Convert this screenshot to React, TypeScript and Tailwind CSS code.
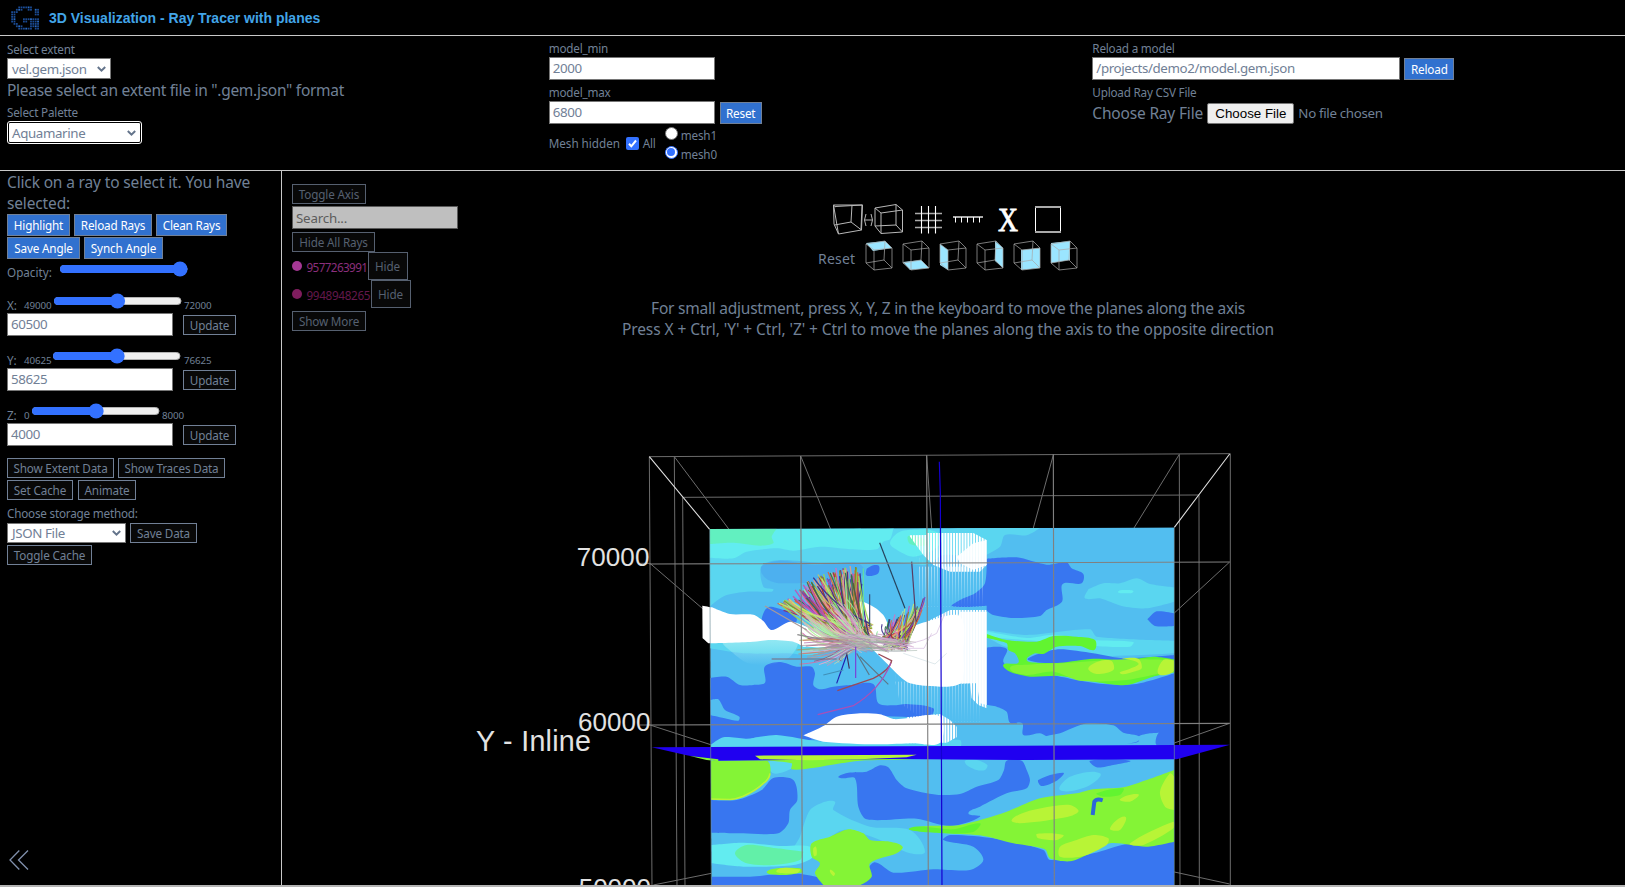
import React from "react";

const LOGO = [
  "000111111000",
  "001110011011",
  "111000000011",
  "110000000011",
  "110000000000",
  "110001111111",
  "110001101111",
  "011000001111",
  "001110001111",
  "000111111011",
];

function Logo() {
  return (
    <svg className="block h-[24px] w-[28px]" viewBox="0 0 28 24">
      {LOGO.flatMap((row, y) =>
        row.split("").map((c, x) =>
          c === "1" ? (
            <rect key={`${x}-${y}`} x={x * 2.36 + 0.2} y={y * 2.36 + 0.5} width="1.8" height="1.8" fill={(x * 3 + y * 5) % 7 === 0 ? "#2a6cc4" : "#1a4a92"} />
          ) : null,
        ),
      )}
    </svg>
  );
}

function Chevron() {
  return (
    <svg className="h-[6px] w-[9px] shrink-0" viewBox="0 0 9 6">
      <path d="M0.8 1 L4.5 4.6 L8.2 1" fill="none" stroke="#64748b" strokeWidth="2" />
    </svg>
  );
}

function Select({ text, className }: { text: string; className: string }) {
  return (
    <div className={`flex items-center justify-between bg-white pr-[4px] pl-[4px] text-[13.33px] leading-[18px] tracking-[-0.38px] text-[#718096] ${className}`}>
      <span>{text}</span>
      <Chevron />
    </div>
  );
}

function Field({ text, className = "w-[166px]" }: { text: string; className?: string }) {
  return (
    <div className={`h-[23px] shrink-0 border border-[#767676] bg-white pl-[3px] text-[13.33px] leading-[21px] tracking-[-0.38px] text-[#718096] ${className}`}>{text}</div>
  );
}

function Blue({ children, className }: { children: React.ReactNode; className: string }) {
  return (
    <button className={`h-[22px] shrink-0 border border-[#718096] bg-[#3171cf] text-center text-[11.7px] leading-[21px] tracking-[-0.15px] whitespace-nowrap text-white ${className}`}>
      {children}
    </button>
  );
}

function Dark({ children, className }: { children: React.ReactNode; className: string }) {
  return (
    <button className={`shrink-0 border bg-[#080808] text-center text-[11.7px] tracking-[-0.15px] whitespace-nowrap ${className}`}>
      {children}
    </button>
  );
}

function Slider({ value }: { value: number }) {
  const cx = 7.5 + (128 - 15) * value;
  return (
    <svg className="h-[16px] w-[128px] shrink-0" viewBox="0 0 128 16">
      <rect x="0.5" y="4.5" width="126.5" height="7" rx="3.5" fill="#efefef" stroke="#b2b2b2" />
      <rect x="0" y="4" width={cx} height="8" rx="4" fill="#3371ff" />
      <circle cx={cx - 0.5} cy="8" r="7.6" fill="#3371ff" />
    </svg>
  );
}

function Axis({ name, min, max, value, pos, minClass, maxClass }: { name: string; min: string; max: string; value: string; pos: number; minClass: string; maxClass: string }) {
  return (
    <div className="h-[55px]">
      <div className="flex h-[20px] text-[11.7px] leading-[20px]">
        <span className="w-[17px] shrink-0 pt-[2px]">{name}</span>
        <span className={`shrink-0 pt-[3px] text-[9.8px] tracking-[-0.1px] ${minClass}`}>{min}</span>
        <Slider value={pos} />
        <span className={`pt-[3px] text-[9.8px] tracking-[-0.1px] ${maxClass}`}>{max}</span>
      </div>
      <div className="flex">
        <Field text={value} />
        <Dark className="mt-[2px] ml-[10px] h-[20px] w-[53px] border-[#718096] leading-[19px] text-[#718096]">Update</Dark>
      </div>
    </div>
  );
}

function CubeWire({ face }: { face: string }) {
  return (
    <svg className="h-[31px] w-[28px] shrink-0" viewBox="0 0 28 31">
      <path d={face} fill="#9be5ff" />
      <path d="M1 4 L20 1 L27 8 L27 28 L9 30 L1 23Z M9 10 L27 8 M1 4 L9 10 L9 30 M20 1 L19 20 L27 28 M1 23 L19 20" fill="none" stroke="#a8a8a8" strokeWidth="0.9" opacity=".8" />
    </svg>
  );
}

const FACES = [
  "M1 3 L20 1 L27 8 L8 11Z",
  "M1 22 L19 20 L27 28 L8 30Z",
  "M1 4 L9 10 L9 30 L1 25Z",
  "M19 1 L27 8 L27 28 L19 21Z",
  "M8 10 L27 8 L27 28 L8 30Z",
  "M1 3 L20 1 L20 20 L1 23Z",
];

function Toolbar() {
  return (
    <div className="flex flex-col">
      <svg className="ml-[830px] block h-[34px] w-[240px] overflow-visible" viewBox="830 201 240 34">
        <g fill="none" stroke="#b8b8b8" strokeWidth="1">
          <path d="M833.5 205 L862.5 205 L861.5 230 L838.5 234 L834 224Z M835.5 206.500 L862.500 205 M833.5 205 L838.5 234 M852 205 L851 222 L861.500 230 M834.500 225 L851 222 M862 205 L861 229 M833 205 L836 207" />
          <path d="M866 214 L864.500 220 L866 226 M871 214 L872.500 220 L871 226 M865 220 L872 220" />
          <path d="M875 208 L896 204.500 L902.500 210 L902.500 232 L881 233.500 L875 226Z M881 213 L902.500 210 M875 208 L881 213 L881 233.500 M896 204.500 L896 225 L902.500 232 M875 226 L896 225" />
        </g>
        <path d="M915 213.5H942M915 220.500H942M915 227.500H942" stroke="#aaa" strokeWidth="1.6" />
        <path d="M921.5 206V233.500M928.500 206V233.500M935.500 206V233.500" stroke="#fff" strokeWidth="1.1" />
        <path d="M953 217H983" stroke="#aaa" strokeWidth="2" />
        <path d="M955.5 217V222.500M961.500 217V222.500M967.500 217V222.500M973.500 217V222.500M979.500 217V222.500" stroke="#fff" />
        <text x="1008" y="231" textAnchor="middle" fill="#fff" stroke="#fff" strokeWidth=".8" fontFamily="Liberation Serif, serif" fontSize="33" textLength="20" lengthAdjust="spacingAndGlyphs">X</text>
        <path d="M1035.500 206V233M1060.500 206V233" stroke="#fff" />
        <path d="M1035 207H1061M1035 232H1061" stroke="#aaa" strokeWidth="2" />
      </svg>
      <div className="ml-[818px] flex h-[32px] pt-[5px]">
        <span className="w-[47px] pt-[5px] text-[14px] leading-[28px] tracking-[0.2px] text-[#718096]">Reset</span>
        <div className="flex gap-[9px]">
          {FACES.map((f) => (
            <CubeWire key={f} face={f} />
          ))}
        </div>
      </div>
    </div>
  );
}

function rng(seed: number) {
  let s = seed;
  return () => {
    s = (s * 1664525 + 1013904223) % 4294967296;
    return s / 4294967296;
  };
}

const INK = ["#c8e870", "#7be070", "#8a2a6a", "#b84848", "#3a2a8a", "#a0d848", "#9af0a8", "#555b3a", "#c050b8", "#e8a080", "#2f6a50", "#c8c860", "#a83028", "#8a8a20", "#7a40c0", "#d870c0", "#e06040"];
const HAZE = ["#d8b8d8", "#a8b8b0", "#c890c0", "#b0a0a8", "#98a0a8", "#c8d8b0", "#b878b0", "#8aa890"];

type Ray = { d: string; c: string; w: number; o: number };

function makeRays() {
  const r = rng(77);
  const out: Ray[] = [];
  const pick = () => INK[Math.floor(r() * INK.length)];
  for (let i = 0; i < 150; i++) {
    const t = r();
    const len = r() * r() * 60;
    const tx = 955 + t * 235 + (r() - 0.5) * 10 + len * 0.6;
    const ty = 485 - Math.sin(t * 1.57) * 108 + len + (r() - 0.3) * 14;
    const fx = 1150 + r() * 90;
    const fy = 550 + r() * 75;
    out.push({ d: `M${tx} ${ty} Q${tx + (fx - tx) * 0.42} ${ty + (fy - ty) * 0.7} ${fx} ${fy}`, c: pick(), w: 4, o: 0.9 });
  }
  for (let i = 0; i < 80; i++) {
    const tx = 1020 + r() * 150;
    const ty = 515 + r() * 65 - (tx - 1030) * 0.3;
    out.push({
      d: `M${tx} ${ty} Q${tx + 50} ${ty + 55} ${1160 + r() * 70} ${590 + r() * 30}`,
      c: ["#b8f0a0", "#c8e8b0", "#d8a0d0", "#f0b8c0", "#a0e8b8", "#a0f080", "#d060b8"][Math.floor(r() * 7)],
      w: 3.2,
      o: 0.75,
    });
  }
  for (let i = 0; i < 85; i++) {
    const t = r();
    const tx = 1250 + t * 145 + (r() - 0.5) * 14;
    const ty = 560 - t * 95 + r() * 65;
    const fx = 1270 + r() * 75;
    const fy = 590 + r() * 45;
    out.push({ d: `M${tx} ${ty} Q${tx - 14} ${ty + (fy - ty) * 0.5} ${fx} ${fy}`, c: pick(), w: 3.4, o: 0.9 });
  }
  for (let i = 0; i < 50; i++) {
    const tx = 1000 + r() * 150;
    const ty = 595 + r() * 82;
    out.push({ d: `M${tx} ${ty} Q${1110 + r() * 40} ${ty - 8} ${1160 + r() * 50} ${600 + r() * 24}`, c: [...HAZE, "#b0a840", "#a05070", "#d08070"][Math.floor(r() * 11)], w: 3, o: 0.8 });
  }
  for (let i = 0; i < 100; i++) {
    const x = 1100 + r() * 160;
    const y = 580 + r() * 50;
    out.push({ d: `M${x} ${y} Q${x + 40} ${y + 12 * r()} ${x + 50 + r() * 80} ${595 + r() * 45}`, c: HAZE[Math.floor(r() * HAZE.length)], w: 2.4, o: 0.75 });
  }
  return out;
}

const RAYS = makeRays();

type Pt = [number, number];

function smoothLoop(pts: Pt[]) {
  const n = pts.length;
  const pinned = ([x, y]: Pt) => x <= 756 || x >= 2143 || y <= 268 || y >= 1338 || x === 1580 || x === 1030;
  const tangent = (i: number): Pt => {
    if (pinned(pts[i])) return [0, 0];
    const a = pts[(i + n - 1) % n];
    const b = pts[(i + 1) % n];
    const len = Math.hypot(b[0] - a[0], b[1] - a[1]) || 1;
    return [(b[0] - a[0]) / len, (b[1] - a[1]) / len];
  };
  let d = `M${pts[0][0]} ${pts[0][1]}`;
  for (let i = 0; i < n; i++) {
    const j = (i + 1) % n;
    const p = pts[i];
    const q = pts[j];
    const k = Math.hypot(q[0] - p[0], q[1] - p[1]) * 0.26;
    const s = tangent(i);
    const e = tangent(j);
    d += `C${(p[0] + s[0] * k).toFixed(1)} ${(p[1] + s[1] * k).toFixed(1)} ${(q[0] - e[0] * k).toFixed(1)} ${(q[1] - e[1] * k).toFixed(1)} ${q[0]} ${q[1]}`;
  }
  return d + "Z";
}

function smooth(d: string) {
  return d
    .split("M")
    .filter((s) => s.trim())
    .map((sub) => {
      const pts: Pt[] = [];
      const parts = ("L" + sub).match(/[LQHVZ][^LQHVZ]*/g) || [];
      for (const part of parts) {
        const nums = (part.slice(1).match(/-?[\d.]+/g) || []).map(Number);
        const last = pts[pts.length - 1];
        if (part[0] === "H") pts.push([nums[0], last[1]]);
        else if (part[0] === "V") pts.push([last[0], nums[0]]);
        else for (let i = 0; i + 1 < nums.length; i += 2) pts.push([nums[i], nums[i + 1]]);
      }
      return smoothLoop(pts);
    })
    .join("");
}

function Patch({ d, fill, opacity }: { d: string; fill: string; opacity?: number }) {
  return <path d={smooth(d)} fill={fill} opacity={opacity} />;
}

const D = "#3876f0";
const L = "#52bef0";
const C = "#5ad6f0";
const B = "#62ecf0";
const G = "#84f436";
const Y = "#b8f436";
const H = "#62f430";

function Terrain() {
  return (
    <>
      <clipPath id="map">
        <path d="M749 267L2143 262V1340H754Z" />
      </clipPath>
      <g clipPath="url(#map)">
        <path fill={L} d="M749 267 L2143 262 L2143 1340 L754 1340Z" />
        <Patch fill={C} d="M749 266V500Q770 482 800 465Q860 455 935 455Q940 448 910 440L905 378Q960 360 1080 368L1300 366Q1400 374 1450 345Q1560 350 1620 320Q1635 285 1700 286L1740 264Z" />
        <Patch fill={B} d="M749 266V353Q820 355 860 335Q950 325 1000 332Q1080 320 1180 328Q1250 328 1270 305Q1290 298 1300 266Z M1320 275Q1290 310 1320 335Q1360 350 1420 330L1450 290L1400 268Z" />
        <Patch fill="#62f0c0" d="M749 266V312Q820 308 900 317Q940 310 935 290L950 266Z M1345 288L1390 296L1400 315L1350 312Z" />
        <Patch fill={D} opacity={0.18} d="M905 378Q960 362 1060 374L1190 368L1215 395L1180 420L960 430Q925 420 905 400Z" />
        <Patch fill={D} d="M915 510Q930 500 970 510L1010 535L990 570L930 570L905 545Z M1220 386Q1240 376 1257 378Q1255 400 1235 408Q1218 405 1220 386Z" />
        <Patch fill={D} d="M1580 356L1670 352L1760 374L1820 367L1835 385L1870 402L1865 430L1808 432L1806 485L1760 510L1740 528L1660 534L1600 525L1580 512V497L1476 499L1500 480L1545 460L1575 430Z" />
        <Patch fill={D} d="M2062 538Q2090 514 2143 520V558Q2085 558 2062 538Z" />
        <Patch fill={D} d="M750 714L800 710Q840 735 880 735Q915 728 914 680Q960 666 1010 680Q1055 680 1065 700Q1060 735 1080 748Q1120 740 1170 735L1240 732Q1255 790 1300 796L1340 792L1420 805L1410 830L1250 830L1180 860L1050 900Q900 890 840 905L752 915Z" />
        <Patch fill={L} d="M751 780L775 778Q795 810 838 830L835 842L800 836L752 826Z" />
        <Patch fill={C} d="M752 915Q790 892 860 896L950 885L1080 905L1300 910L1500 900L1500 921H752Z M1050 600L750 604V625Q850 640 980 640L1080 640Z" />
        <Patch fill={D} d="M1580 623L1640 626L1630 665L1660 690L1780 706L1830 716L1930 732L2030 732L2143 700V915H2090Q2095 880 2120 878L2070 880L2035 890Q2035 905 2010 910L1830 912L1770 895L1740 880L1690 885L1687 850L1650 848L1640 815L1610 800L1580 795Z" />
        <Patch fill={L} d="M1740 896L1800 880L1880 850L1960 856L1990 878L2040 890L2030 905L1960 916L1760 910Z" />
        <Patch fill={C} d="M1885 448Q1930 430 1980 430Q2030 415 2070 432L2143 442V485Q2060 505 1985 498L1920 475Q1875 475 1885 448Z M1580 570L1700 585L1890 568L1910 590L2143 602V640L1900 648L1640 620L1580 590Z" />
        <Patch fill={B} d="M1580 574L1700 594L1780 584L1900 600L2020 606L2010 620L1900 618L1580 590Z M1974 455L2000 450L2020 455L1995 460Z" />
        <Patch fill={D} d="M1705 660L1740 640L1800 628L1900 640L1990 655L2143 645V662L1800 670Z" />
        <Patch fill={H} d="M1580 582L1640 600L1730 605L1780 588L1850 590L1905 600L1903 630L1860 618L1790 620L1750 642L1725 640L1700 660L1730 668L1800 668L1900 656L2000 660L2080 650L2143 658V697L2080 710L2000 735L1920 728L1800 708L1710 710L1650 695L1630 674L1675 668L1665 640L1645 630L1640 610L1580 594Z" />
        <Patch fill={G} d="M1650 685L1700 674L1830 668L2000 658L2143 660V690L2000 720L1860 722L1780 695L1700 705Z" />
        <Patch fill={Y} d="M1885 685L1920 663H1955L1960 690L1910 702Z M1985 655L2035 656Q2045 685 2020 695Q1980 700 2010 686Q2035 670 1985 655Z M2110 660L2143 662L2140 695L2095 702Z" />
        <Patch fill={C} d="M925 965L995 960V985L940 1000Z M1515 962L1550 960L1582 975L1575 990L1550 990L1520 975Z" />
        <Patch fill={G} d="M885 958L1370 950L1350 958L1200 962L1130 972L1050 985L995 988V970Z" />
        <Patch fill={G} d="M752 962L780 962L920 962L930 975L930 1005L910 1030L850 1070L810 1080L752 1077Z" />
        <path fill="none" stroke={Y} strokeWidth="5" strokeLinejoin="round" d="M752 1077L810 1079Q830 1077 850 1069Q890 1050 910 1030Q928 1018 930 1000" />
        <Patch fill={D} d="M905 1050L940 1014L1000 1020L1012 1080L990 1110L985 1150L955 1180L850 1180L752 1178V1080L830 1080Z" />
        <Patch fill={D} d="M1135 1010L1165 998L1220 995L1260 976L1285 982L1310 1020L1340 1045L1430 1064L1500 1062L1550 1040L1615 1020L1632 990L1640 962L1685 962L1700 990L1710 1020L1700 1045L1640 1060L1560 1100L1525 1120L1560 1130L1470 1158L1370 1136L1220 1138L1195 1100L1185 1015L1150 1015Z M1735 1020L1810 998L1790 1022L1745 1038Z M1890 962L2010 962L1960 975L1910 982Z" />
        <Patch fill={C} d="M1095 1085L1125 1085L1120 1110L1230 1160L1350 1170L1395 1235L1350 1240L1260 1200L1150 1170L1060 1230L1000 1240L1020 1190L1050 1110Z M1800 1050L1830 1010L1920 1000L1880 1040Z" />
        <Patch fill={B} d="M755 1215L850 1208L960 1218L1050 1220L1060 1250L1000 1275L850 1280L755 1270Z" />
        <Patch fill="#62f0a8" d="M825 1240Q860 1215 950 1225L1030 1235L1020 1260L940 1275L860 1270Z" />
        <Patch fill={D} d="M755 1310L870 1310L1000 1300L1100 1320V1340H755Z" />
        <Patch fill={D} d="M1240 1268L1300 1298L1420 1288L1530 1290L1570 1260L1540 1220L1450 1200L1470 1185L1600 1195L1750 1230L1770 1260L1900 1240L2000 1212L2143 1205V1340H1200Z" />
        <Patch fill={G} d="M1360 1165L1500 1155L1640 1115L1740 1075L1850 1060L1900 1048L1990 1042L2060 1020L2143 990V1205L2060 1220L1950 1210L1880 1245L1830 1264L1770 1255L1755 1228L1660 1210L1560 1186L1440 1178Z" />
        <Patch fill={H} d="M1350 1164L1480 1168L1560 1150L1540 1176L1450 1180Z M1910 1060L1990 1045L1980 1065L1930 1070Z" />
        <Patch fill={Y} d="M1655 1140L1700 1115L1780 1098L1830 1095L1855 1115L1800 1135L1680 1150Z M1730 1182L1810 1185L1790 1200L1735 1195Z M1800 1220L1850 1200L1900 1185L1945 1195L1940 1215L1870 1248L1800 1250Z M1980 1078L2035 1063L2010 1085Z M2100 1055L2130 1000L2143 1010V1110L2115 1100Z M2010 1210L2140 1145V1165L2050 1215Z M1950 1165L1995 1130L1980 1170Z" />
        <path fill="none" stroke="#2c68d8" strokeWidth="12" d="M1898 1125L1903 1085Q1910 1075 1928 1081" />
        <Patch fill={G} d="M1055 1210L1110 1190L1165 1168L1210 1180L1230 1200L1290 1205L1328 1220L1310 1240L1230 1270L1235 1310L1200 1335L1150 1340H1095L1065 1300L1080 1270L1055 1250Z M920 1295L950 1285L1020 1285L1030 1297L980 1305L930 1303Z" />
        <Patch fill={Y} d="M1060 1225L1068 1220L1070 1245L1062 1248Z M1110 1290L1125 1300L1120 1308Z M950 1291L1020 1288L1010 1300Z" />
      </g>
      <path fill="#2000f0" d="M575 922L2310 914L2150 958L1700 960L1300 957L770 962L680 946Z" />
      <path fill={G} d="M690 948L775 958V964L740 960Z" />
      <path fill={Y} d="M885 947L1370 944L1340 952L1200 958L1050 961L900 958Z" />
    </>
  );
}

function Clouds() {
  const solid =
    "M1030 886L1090 858L1130 830L1200 820L1260 823L1300 837L1340 835L1440 830L1440 908L1360 910L1250 913L1090 905Z M1195 488L1240 500L1270 525L1300 570L1400 545L1500 530L1510 640L1500 730L1400 737L1340 725L1280 670L1200 580Z";
  const left = "M727 497L756 502L810 522L880 524L910 543L935 570L990 545L1040 560L1100 590L1150 615L1030 620L1000 605L930 600L870 606L745 610L728 595Z";
  const bars = "M1347 286L1400 285L1400 279L1540 279L1580 300V375L1560 395H1470L1420 375L1390 345Z M1400 545L1470 510L1580 510V805L1555 795L1535 775L1530 730L1400 738Z M1340 832L1440 822L1470 840L1490 860V892L1460 908L1340 910Z";
  return (
    <g>
      <defs>
        <pattern id="bars" width="8.6" height="20" patternUnits="userSpaceOnUse">
          <rect width="6" height="20" fill="#fff" />
        </pattern>
        <linearGradient id="fade" x1="0" y1="0" x2="0" y2="1">
          <stop offset="0" stopColor="#fff" stopOpacity=".5" />
          <stop offset="1" stopColor="#fff" stopOpacity="0" />
        </linearGradient>
        <linearGradient id="veil" x1="0" y1="0" x2="0" y2="1">
          <stop offset="0" stopColor="#b8f4f4" stopOpacity=".6" />
          <stop offset="1" stopColor="#b8f4f4" stopOpacity="0" />
        </linearGradient>
        <pattern id="thin" width="9" height="120" patternUnits="userSpaceOnUse" y="380">
          <rect width="3" height="120" fill="url(#fade)" />
        </pattern>
        <pattern id="thinLow" width="9" height="120" patternUnits="userSpaceOnUse" y="725">
          <rect width="3" height="120" fill="url(#fade)" />
        </pattern>
      </defs>
      <path d="M1370 345L1400 375H1570V500H1380Z" fill="url(#thin)" />
      <path d="M1300 700L1340 725H1570L1560 845H1400L1320 790Z" fill="url(#thinLow)" opacity=".7" />
      <path d={smooth("M790 606H1010L990 650L930 675L860 668L820 640Z")} fill="url(#veil)" />
      <path d={bars} fill="url(#bars)" />
      <path d="M1490 350L1540 310L1580 300V375L1540 390L1500 370Z M1480 560L1500 515L1580 515V795L1560 790L1550 730L1480 730Z" fill="#fff" opacity=".9" />
      <path d={smooth(left)} fill="#fff" />
      <path d={smooth(solid)} fill="#fff" />
    </g>
  );
}

function Scene() {
  return (
    <svg className="absolute inset-0 h-full w-full" viewBox="282 171 1343 714" preserveAspectRatio="none">
      <g transform="translate(460 440) scale(0.33333)">
        <g fill="none" stroke="#6c6c6c" strokeWidth="3">
          <path d="M568 50L2311 41M668 172L2217 165M568 50L576 1340M643 50L651 1340M668 172L675 1340M2311 41V1340M2158 43L2160 1340M2217 165L2218 1340" />
          <path d="M643 50L807 268M1022 48L1112 268M1400 46L1415 266M1780 45L1720 264M2158 43L2022 264" />
          <path d="M540 370H570L750 525M540 855H570L752 914M580 1335L754 1300M2309 366L2143 519M2309 850L2143 909M2143 1296L2309 1332" />
        </g>
        <path d="M568 50L749 268M2309 42L2143 262" fill="none" stroke="#e0e0e0" strokeWidth="3.2" />
        <Terrain />
        <Clouds />
        <g fill="none">
          {RAYS.map((r, i) => (
            <path key={i} d={r.d} stroke={r.c} strokeWidth={r.w} opacity={r.o} />
          ))}
          <g strokeWidth="3.5">
            <path d="M1259 308L1335 505" stroke="#26425c" />
            <path d="M1355 365L1368 545" stroke="#5a3a60" />
            <path d="M1229 463V560" stroke="#38507a" />
            <path d="M1210 385V560" stroke="#62e0a0" />
            <path d="M915 498L1040 570" stroke="#a89a98" />
            <path d="M935 657H1130" stroke="#7a6878" />
            <path d="M1012 584L1120 605" stroke="#8a8a8a" />
            <path d="M1130 730L1160 645" stroke="#2020b0" />
            <path d="M1187 714V620" stroke="#7a40d8" />
            <path d="M1168 686L1160 640" stroke="#40305a" />
            <path d="M1090 705L1150 690" stroke="#4090b8" />
            <path d="M1190 640L1228 705M1200 650L1285 733" stroke="#5a7888" />
            <path d="M1132 752L1240 715Q1290 690 1295 662L1255 642" stroke="#9a4a58" strokeWidth="4" />
            <path d="M1073 824L1180 797Q1260 750 1292 670" stroke="#a850b8" />
            <path d="M1320 620L1390 600L1430 580L1455 520M1340 625H1392L1415 580" stroke="#dcc8e4" strokeWidth="2.5" />
            <path d="M1330 640L1425 672L1460 640" stroke="#d8e4e8" strokeWidth="2.5" />
          </g>
        </g>
        <path d="M568 372L2309 366M568 855L2309 850M1022 48L1027 1340M1400 46L1405 1340M1780 43L1783 1340" fill="none" stroke="#808080" strokeWidth="3.4" />
        <path d="M749 268L754 1340M2143 262V1340" fill="none" stroke="#70909a" strokeWidth="2" />
        <path d="M1438 65L1441 160L1446 1340" fill="none" stroke="#1400d0" strokeWidth="3.6" />
        <g fill="#e2e2e2" fontFamily="Liberation Sans, Arial, sans-serif" fontSize="78">
          <text x="350" y="377" textLength="218">70000</text>
          <text x="354" y="873" textLength="217">60000</text>
          <text x="356" y="1370" textLength="217">50000</text>
          <text x="48" y="934" fontSize="86" textLength="345">Y - Inline</text>
        </g>
      </g>
    </svg>
  );
}

function RayItem({ id, color, dot, className }: { id: string; color: string; dot: string; className: string }) {
  return (
    <div className="flex h-[28px] items-center">
      <span className={`mr-[4.5px] size-[10px] shrink-0 rounded-full ${dot}`} />
      <span className={`shrink-0 pt-[1px] text-[11.7px] leading-[20px] ${color} ${className}`}>{id}</span>
      <Dark className="h-[28px] w-[40px] border-[#566070] leading-[27px] text-[#566070]">Hide</Dark>
    </div>
  );
}

export default function App() {
  return (
    <div className="flex h-[887px] w-[1625px] flex-col overflow-hidden bg-black font-['Noto_Sans','Open_Sans',sans-serif] text-[#718096]">
      <header className="flex h-[36px] shrink-0 items-start border-b border-[#c8c8c8] pt-[6px] pl-[11px]">
        <Logo />
        <h1 className="ml-[10px] font-['Liberation_Sans',Arial,sans-serif] text-[14px] leading-[24px] font-bold text-[#42a5e8]">3D Visualization - Ray Tracer with planes</h1>
      </header>

      <section className="grid h-[135px] shrink-0 grid-cols-3 border-b border-[#c8c8c8] text-[11.7px] leading-[20px] tracking-[-0.2px]">
        <div className="pt-[3px] pl-[7px]">
          <div className="h-[19px]">Select extent</div>
          <Select text="vel.gem.json" className="h-[21px] w-[104px] border border-[#767676]" />
          <div className="h-[24px] text-[15.5px] leading-[22px] tracking-[-0.28px]">Please select an extent file in &quot;.gem.json&quot; format</div>
          <div className="h-[19px] leading-[19px]">Select Palette</div>
          <Select text="Aquamarine" className="ml-[1px] h-[21px] w-[133px] rounded-[2px] border border-black pl-[3px]! outline-[1.5px] outline-white" />
        </div>
        <div className="pt-[3px] pl-[7px]">
          <div className="h-[18px] leading-[19px]">model_min</div>
          <Field text="2000" />
          <div className="h-[21px] pt-[2px]">model_max</div>
          <div className="flex gap-[5px]">
            <Field text="6800" />
            <Blue className="mt-[1px] w-[42px]">Reset</Blue>
          </div>
          <div className="flex h-[40px]">
            <span className="w-[77px] shrink-0 pt-[9px] tracking-[-0.02px]">Mesh hidden</span>
            <svg className="mt-[13px] size-[13px] shrink-0" viewBox="0 0 13 13">
              <rect width="13" height="13" rx="2" fill="#3371ff" />
              <path d="M3 6.800L5.300 9.300L10 3.500" fill="none" stroke="#fff" strokeWidth="2" />
            </svg>
            <span className="w-[26px] shrink-0 pt-[9px] pl-[4px]">All</span>
            <div className="flex flex-col pt-[3px]">
              <div className="flex h-[19px] items-start">
                <span className="size-[13px] rounded-full border border-[#767676] bg-white" />
                <span className="ml-[3px] leading-[17px] tracking-[-0.15px]">mesh1</span>
              </div>
              <div className="flex h-[19px] items-start">
                <span className="flex size-[13px] items-center justify-center rounded-full border-[1.5px] border-[#3371ff] bg-white">
                  <span className="size-[8px] shrink-0 rounded-full bg-[#3371ff]" />
                </span>
                <span className="ml-[3px] leading-[17px] tracking-[-0.15px]">mesh0</span>
              </div>
            </div>
          </div>
        </div>
        <div className="pt-[3px] pl-[9px]">
          <div className="h-[18px] leading-[19px]">Reload a model</div>
          <div className="flex gap-[4px]">
            <Field text="/projects/demo2/model.gem.json" className="w-[308px]" />
            <Blue className="mt-[1px] w-[50px]">Reload</Blue>
          </div>
          <div className="h-[22px] pt-[2px]">Upload Ray CSV File</div>
          <div className="flex items-center leading-[22px]">
            <span className="w-[115px] text-[15.5px] tracking-[-0.18px] whitespace-nowrap">Choose Ray File</span>
            <button className="mt-[1px] h-[21px] w-[87px] rounded-[2px] border border-[#767676] bg-[#efefef] font-['Liberation_Sans',Arial,sans-serif] text-[13.33px] leading-[18px] tracking-normal text-black">Choose File</button>
            <span className="ml-[4px] text-[13.33px] tracking-[-0.33px]">No file chosen</span>
          </div>
        </div>
      </section>

      <main className="flex h-[714px] shrink-0">
        <aside className="flex w-[282px] shrink-0 flex-col border-r border-[#c8c8c8] pl-[7px] tracking-[-0.15px]">
          <div className="h-[43px] pt-[1px] text-[15.5px] leading-[21px]">
            Click on a ray to select it. You have
            <br />
            selected:
          </div>
          <div className="flex h-[23px] gap-[4px]">
            <Blue className="w-[63px]">Highlight</Blue>
            <Blue className="w-[78px]">Reload Rays</Blue>
            <Blue className="w-[71px]">Clean Rays</Blue>
          </div>
          <div className="flex h-[24px] gap-[4px]">
            <Blue className="w-[73px]">Save Angle</Blue>
            <Blue className="w-[79px]">Synch Angle</Blue>
          </div>
          <div className="flex h-[32px] text-[11.7px] leading-[20px]">
            <span className="w-[53px] pt-[1px] tracking-normal">Opacity:</span>
            <Slider value={1} />
          </div>
          <Axis name="X:" min="49000" max="72000" value="60500" pos={0.5} minClass="w-[30px]" maxClass="ml-[2px]" />
          <Axis name="Y:" min="40625" max="76625" value="58625" pos={0.505} minClass="w-[29px]" maxClass="ml-[3px]" />
          <Axis name="Z:" min="0" max="8000" value="4000" pos={0.505} minClass="w-[8px]" maxClass="ml-[2px]" />
          <div className="flex h-[22px] gap-[4px]">
            <Dark className="h-[20px] w-[107px] border-[#718096] leading-[19px] text-[#718096]">Show Extent Data</Dark>
            <Dark className="h-[20px] w-[107px] border-[#718096] leading-[19px] text-[#718096]">Show Traces Data</Dark>
          </div>
          <div className="flex h-[22px] gap-[5px]">
            <Dark className="h-[20px] w-[66px] border-[#718096] leading-[19px] text-[#718096]">Set Cache</Dark>
            <Dark className="h-[20px] w-[58px] border-[#718096] leading-[19px] text-[#718096]">Animate</Dark>
          </div>
          <div className="h-[21px] pt-[1px] text-[11.7px] leading-[20px] tracking-[-0.2px]">Choose storage method:</div>
          <div className="flex h-[22px] gap-[4px]">
            <Select text="JSON File" className="h-[20px] w-[119px] border border-[#767676]" />
            <Dark className="h-[20px] w-[67px] border-[#718096] leading-[19px] text-[#718096]">Save Data</Dark>
          </div>
          <Dark className="h-[20px] w-[85px] border-[#718096] leading-[19px] text-[#718096]">Toggle Cache</Dark>
          <svg className="mt-auto mb-[15px] ml-[2px] h-[20px] w-[20px]" viewBox="0 0 20 20">
            <path d="M10.300 0.500L1 10L10.300 19.500M19 0.500L9.500 10L19 19.500" fill="none" stroke="#8090ac" strokeWidth="1.3" />
          </svg>
        </aside>

        <section className="relative min-w-0 flex-1">
          <Scene />
          <div className="relative -ml-[282px] flex flex-col pt-[30px]">
            <Toolbar />
            <div className="mt-[31px] ml-[282px] h-[50px] pr-[11px] text-center text-[15.5px] leading-[21px]">
              <div className="tracking-[-0.23px]">For small adjustment, press X, Y, Z in the keyboard to move the planes along the axis</div>
              <div className="tracking-[-0.08px]">Press X + Ctrl, &apos;Y&apos; + Ctrl, &apos;Z&apos; + Ctrl to move the planes along the axis to the opposite direction</div>
            </div>
          </div>
          <div className="absolute top-[13px] left-[10px] flex flex-col">
            <Dark className="mb-[2px] h-[20px] w-[74px] border-[#566070] leading-[19px] text-[#566070]">Toggle Axis</Dark>
            <div className="mb-[3px] h-[23px] w-[166px] border border-[#5a5a5a] bg-[#bfbfbf] pl-[3px] text-[13.33px] leading-[22px] tracking-[-0.2px] text-[#5c5c5c]">Search...</div>
            <Dark className="h-[20px] w-[83px] border-[#566070] leading-[19px] text-[#566070]">Hide All Rays</Dark>
            <RayItem id="9577263991" color="text-[#8b2f7c]" dot="bg-[#a53894]" className="w-[61px] tracking-[-0.6px]" />
            <RayItem id="9948948265" color="text-[#64184c]" dot="bg-[#7f1d5e]" className="w-[64px] tracking-[-0.32px]" />
            <Dark className="mt-[3px] h-[20px] w-[74px] border-[#566070] leading-[19px] text-[#566070]">Show More</Dark>
          </div>
        </section>
      </main>
      <div className="h-[2px] shrink-0 bg-[#b4b4b4]" />
    </div>
  );
}
